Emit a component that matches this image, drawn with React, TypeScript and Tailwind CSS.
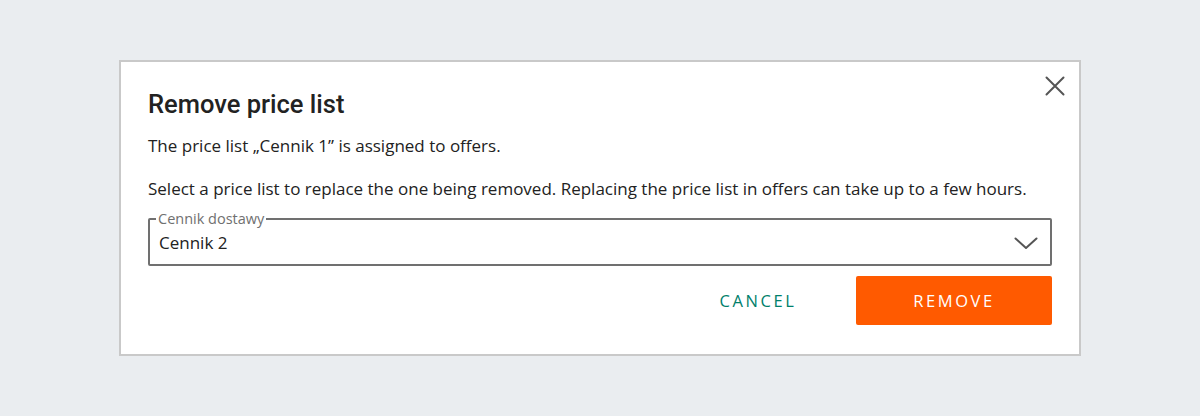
const App = () => {
  return (
    <div className="flex h-screen w-full items-center justify-center bg-[#eaedf0]">
      <div className="relative w-[962px] border-2 border-[#c9c9c9] bg-white px-[27px] pb-[29px] pt-[28px]">
        {/* Close button */}
        <button className="absolute right-[14px] top-[14px] text-[#555]">
          <svg width="20" height="20" viewBox="0 0 20 20" fill="none" stroke="currentColor" strokeWidth="2" strokeLinecap="round">
            <path d="M1.5 1.5l17 17M18.5 1.5l-17 17" />
          </svg>
        </button>

        <h2 className="font-['Roboto',sans-serif] text-[25.5px] font-medium leading-[28px] text-[#222]">
          Remove price list
        </h2>

        <div className="font-['Open_Sans',sans-serif] text-[17px] leading-[24px] text-[#222]">
          <p className="mt-[16px]">
            The price list „Cennik 1” is assigned to offers.
          </p>
          <p className="mt-[19px]">
            Select a price list to replace the one being removed. Replacing the
            price list in offers can take up to a few hours.
          </p>

          {/* Select */}
          <fieldset className="mt-[9px] rounded-[2px] border-2 border-[#707070] pb-[6px] pl-[6px] pr-[12px]">
            <legend className="px-[2px] text-[14.5px] leading-[18px] text-[#707070]">
              Cennik dostawy
            </legend>
            <div className="flex h-[30px] items-center justify-between pl-[3px]">
              <span>Cennik 2</span>
              <svg width="24" height="12" viewBox="0 0 24 12" fill="none" stroke="#555" strokeWidth="2" strokeLinecap="round" strokeLinejoin="round">
                <path d="M1.5 1.5l10.5 9.5 10.5-9.5" />
              </svg>
            </div>
          </fieldset>

          {/* Actions */}
          <div className="mt-[10px] flex items-center justify-end gap-[20px]">
            <button className="flex h-[49px] w-[156px] items-center justify-center text-[16.5px] uppercase tracking-[2.6px] text-[#00806b]">
              Cancel
            </button>
            <button className="flex h-[49px] w-[196px] items-center justify-center rounded-[2px] bg-[#ff5a00] text-[16.5px] uppercase tracking-[2.6px] text-white">
              Remove
            </button>
          </div>
        </div>
      </div>
    </div>
  );
};

export default App;
